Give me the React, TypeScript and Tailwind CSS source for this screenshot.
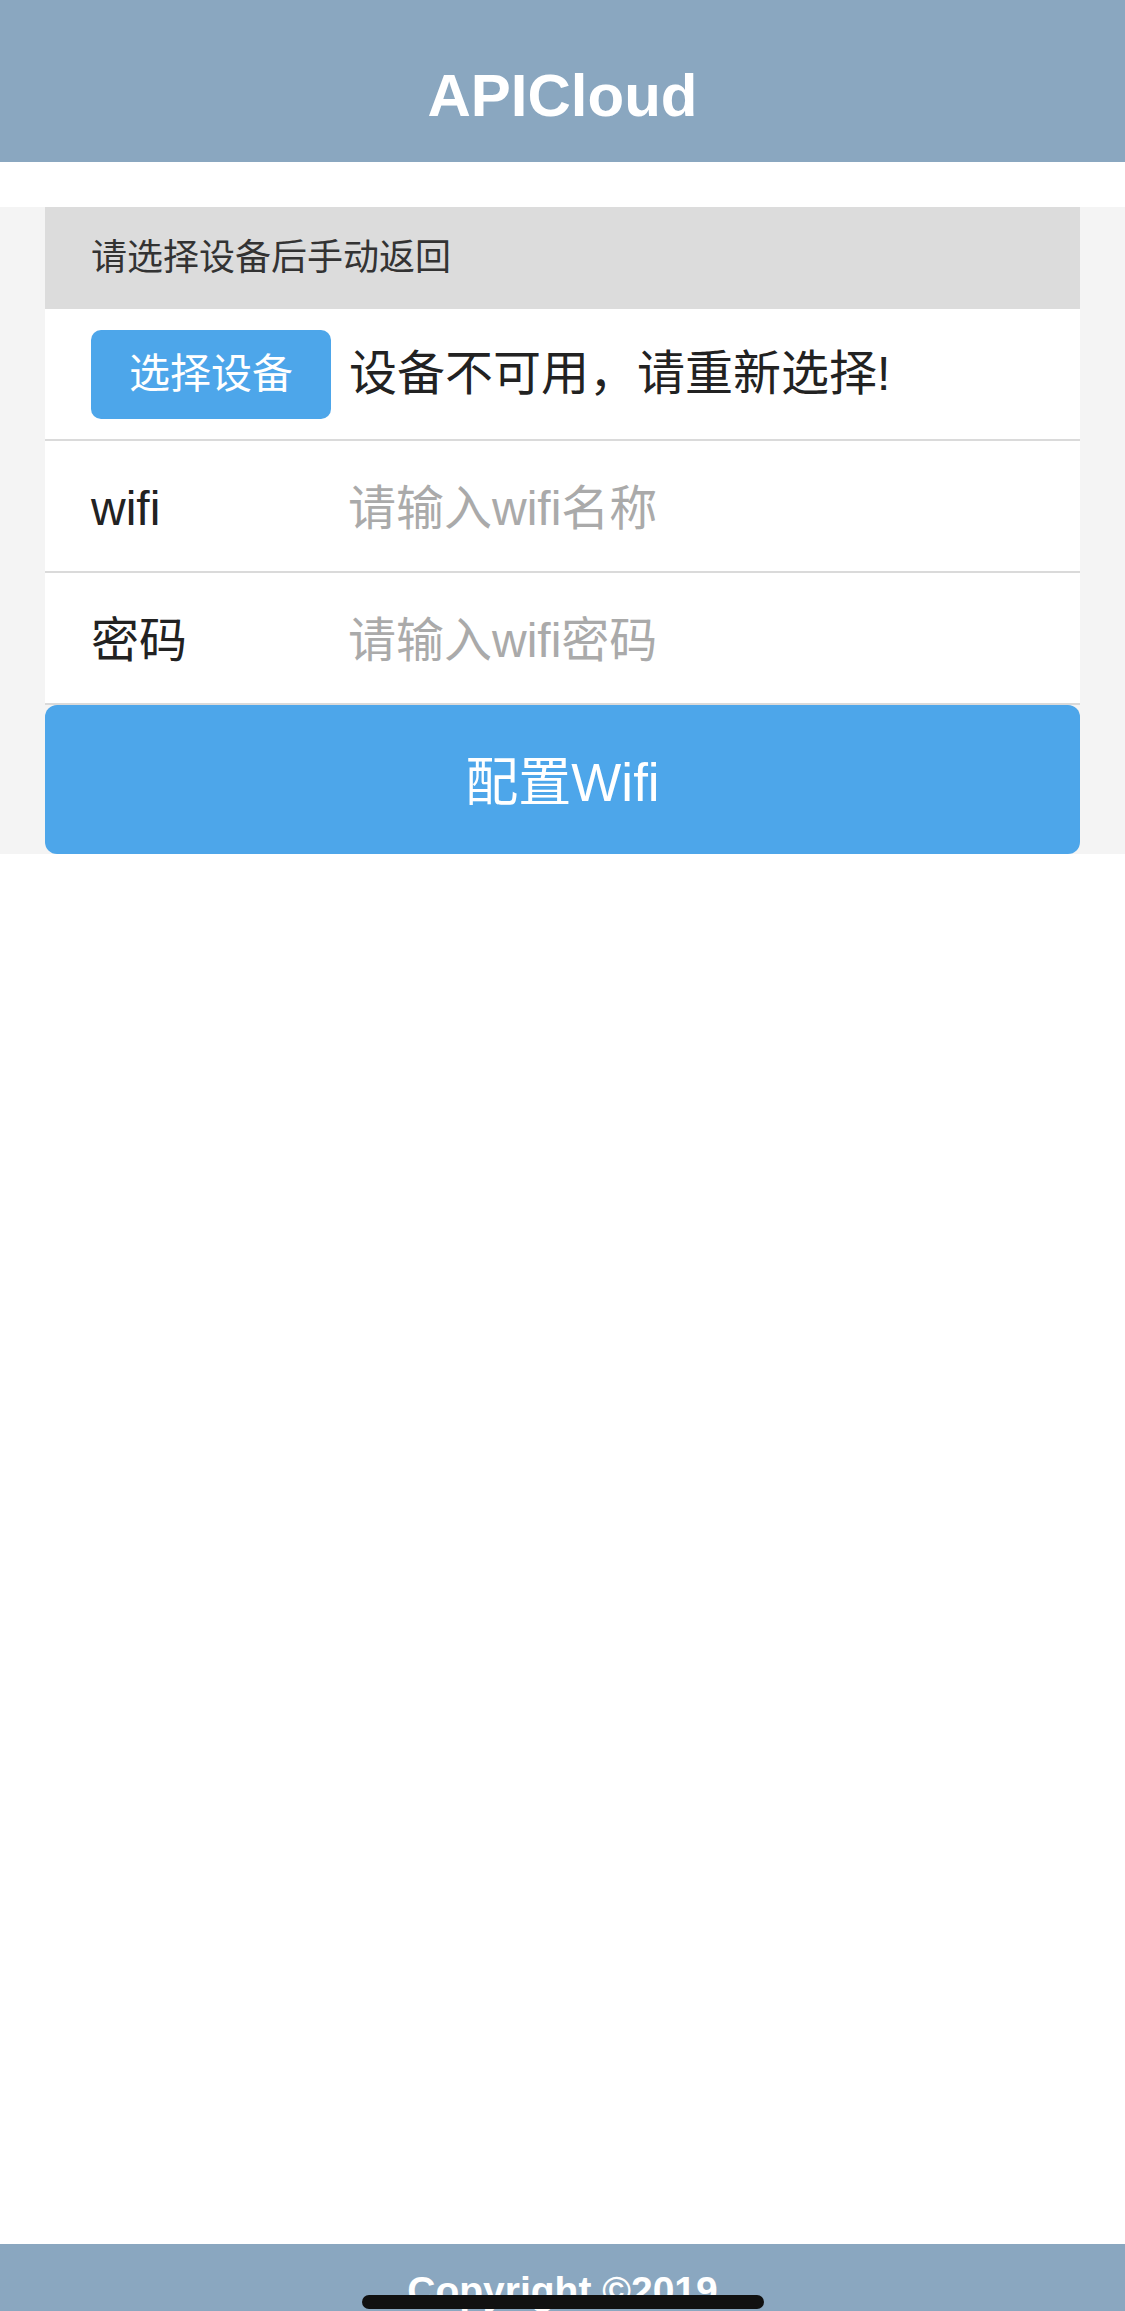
export default function App() {
  const font = { fontFamily: '"Liberation Sans", "Noto Sans CJK SC", sans-serif' };

  return (
    <div
      className="relative flex h-[2311px] w-full flex-col overflow-hidden bg-white font-['Liberation_Sans','Noto_Sans_CJK_SC',sans-serif]"
    >
      {/* Header */}
      <header className="h-[162px] shrink-0 bg-[#8aa7c0] pt-[66px] text-center">
        <h1 className="text-[60px] font-bold leading-none text-white">APICloud</h1>
      </header>

      {/* Content */}
      <div className="mt-[45px] bg-[#f4f4f4] px-[45px]">
        <div className="bg-white">
          <div className="flex h-[102px] items-center bg-[#dcdcdc] pl-[46px]">
            <span className="text-[36px] leading-none text-[#333]">请选择设备后手动返回</span>
          </div>

          <div className="flex h-[132px] items-center gap-[18px] border-b-2 border-[#dadada] pl-[46px]">
            <button
              type="button"
              className="flex h-[89px] w-[240px] items-center justify-center rounded-[10px] bg-[#4da6ea] text-[41px] leading-none text-white"
            >
              选择设备
            </button>
            <span className="text-[48px] leading-none text-[#222]">设备不可用，请重新选择!</span>
          </div>

          <div className="flex h-[132px] items-center border-b-2 border-[#dadada] pl-[46px] pt-[5px]">
            <label className="w-[257px] text-[48px] leading-none text-[#222]">wifi</label>
            <input
              className="flex-1 bg-transparent text-[48px] leading-none text-[#222] outline-none placeholder:text-[#aaaaaa]"
              placeholder="请输入wifi名称"
              style={font}
            />
          </div>

          <div className="flex h-[132px] items-center border-b-2 border-[#dadada] pl-[46px] pt-[5px]">
            <label className="w-[257px] text-[48px] leading-none text-[#222]">密码</label>
            <input
              type="password"
              className="flex-1 bg-transparent text-[48px] leading-none text-[#222] outline-none placeholder:text-[#aaaaaa]"
              placeholder="请输入wifi密码"
              style={font}
            />
          </div>
        </div>

        <button
          type="button"
          className="flex h-[149px] w-full items-center justify-center rounded-[12px] bg-[#4da6ea] pt-[5px] text-[53px] leading-none text-white"
        >
          配置Wifi
        </button>
      </div>

      <div className="flex-1" />

      {/* Footer */}
      <footer className="h-[67px] shrink-0 bg-[#8aa7c0] pt-[27px] text-center">
        <p className="text-[39px] font-bold leading-none text-white">Copyright ©2019</p>
      </footer>

      {/* Home indicator */}
      <div className="absolute bottom-[2px] left-1/2 h-[14px] w-[402px] -translate-x-1/2 rounded-full bg-[#111]" />
    </div>
  );
}
